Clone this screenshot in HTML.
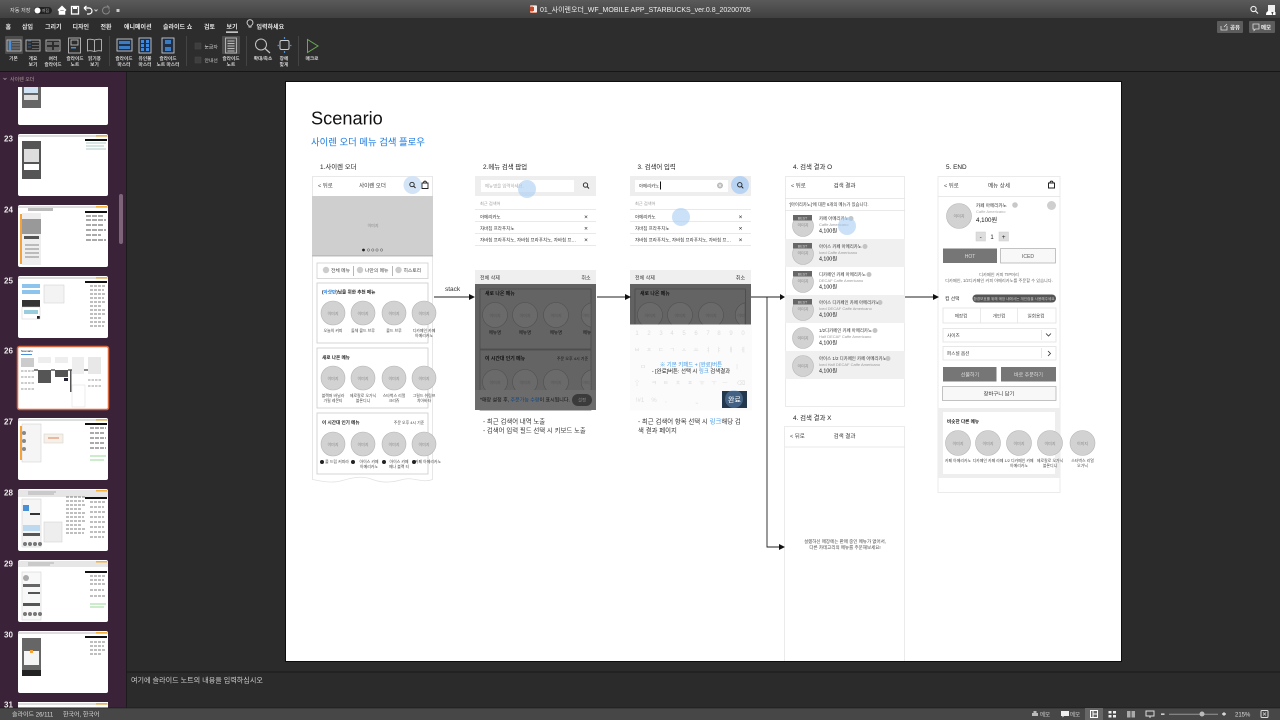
<!DOCTYPE html>
<html lang="ko"><head><meta charset="utf-8"><title>Scenario</title>
<style>
html,body{margin:0;padding:0;width:1280px;height:720px;overflow:hidden;background:#2b2b2b}
svg{display:block;filter:blur(.3px)}
text{font-family:"Liberation Sans","Noto Sans CJK KR",sans-serif}
.u text{fill:#d8d8d8;font-size:4.7px;text-anchor:middle;font-weight:700}
.t text{fill:#e4e4e4;font-size:6px;font-weight:700}
.s{font-size:3.9px;fill:#444;text-anchor:middle}
.g{font-size:4px;fill:#888;text-anchor:middle}
.c{fill:#d2d2d2;stroke:#b5b5b5;stroke-width:.6}
.d{fill:#6a6a6a;stroke:#505050;stroke-width:.6}
.l{stroke:#e2e2e2;stroke-width:.8;fill:none}
.m{fill:#555;font-size:4px;text-anchor:middle}
.h{font-size:6.4px;fill:#222}
.n{font-size:6.4px;fill:#333}
.k{font-size:6px;fill:#ddd;text-anchor:middle}
</style></head><body>
<svg width="1280" height="720" viewBox="0 0 1280 720" xmlns="http://www.w3.org/2000/svg">
<defs>
<linearGradient id="tb" x1="0" y1="0" x2="0" y2="1"><stop offset="0" stop-color="#5a5a5a"/><stop offset="1" stop-color="#404040"/></linearGradient>
</defs>
<rect width="1280" height="720" fill="#2b2b2b"/>
<!-- title bar -->
<rect width="1280" height="18" fill="url(#tb)"/>
<text x="10" y="12" font-size="5.200" fill="#ddd">자동 저장</text>
<rect x="34" y="7" width="18" height="7" rx="3.500" fill="#222"/><circle cx="37.500" cy="10.500" r="3" fill="#fff"/><text x="42" y="12" font-size="3.800" fill="#bbb">꺼짐</text>
<path d="M58 10.500l4-4 4 4M59.500 10v4h5v-4" stroke="#fff" stroke-width="1.500" fill="#fff"/>
<rect x="71.500" y="6.500" width="7" height="7.500" fill="none" stroke="#fff" stroke-width="1.300"/><rect x="73" y="6.500" width="4" height="2.500" fill="#fff"/>
<path d="M84 8h5a3 3 0 0 1 0 6h-2M84 8l2.500-2M84 8l2.500 2.500" stroke="#fff" stroke-width="1.200" fill="none"/>
<path d="M94.500 9.500l1.500 1.500 1.500-1.500" stroke="#ccc" fill="none"/>
<path d="M109 7h-3a3.500 3.500 0 1 0 3.500 3.500M109 7l-2-1.500M109 7v2.500" stroke="#888" fill="none"/>
<rect x="116.500" y="9" width="3" height="3" fill="#ccc"/>
<rect x="530" y="5" width="7" height="8" rx="1" fill="#e8a08a"/><rect x="533" y="6" width="4" height="6" fill="#eee"/><rect x="530" y="7" width="4" height="4" fill="#c4482a"/>
<text x="540" y="12" font-size="7" fill="#eee">01_사이렌오더_WF_MOBILE APP_STARBUCKS_ver.0.8_20200705</text>
<circle cx="1253.500" cy="9" r="2.600" fill="none" stroke="#eee" stroke-width="1.100"/><path d="M1255.500 11l2.500 2.500" stroke="#eee" stroke-width="1.200"/>
<rect x="1268" y="5" width="7" height="7" fill="#eee"/><path d="M1266 15c0-3 1.500-4 3-4s3 1 3 4zM1272.500 15h3v-3h-2" fill="#fff"/>
<!-- ribbon -->
<rect y="18" width="1280" height="53" fill="#2d2d2d"/>
<rect y="71" width="1280" height="1" fill="#161616"/>
<g class="t">
<text x="5.500" y="29">홈</text><text x="22" y="29">삽입</text><text x="45" y="29">그리기</text><text x="72.500" y="29">디자인</text><text x="100.500" y="29">전환</text><text x="124" y="29">애니메이션</text><text x="163" y="29">슬라이드 쇼</text><text x="204" y="29">검토</text><text x="226.500" y="29">보기</text><text x="256.500" y="29">입력하세요</text>
</g>
<rect x="226" y="31.500" width="12" height="1.200" fill="#fff"/>
<path d="M249 30v-1.500a3 3 0 1 1 2 0V30z" fill="none" stroke="#ddd" stroke-width=".9" transform="translate(0,-3)"/>
<rect x="1217" y="21" width="26" height="12" rx="1" fill="#5c5c5c"/><path d="M1221 26v4h6v-4M1224 27l3-3" stroke="#ddd" fill="none" stroke-width=".8"/><text x="1230" y="29.500" font-size="5.500" font-weight="700" fill="#eee">공유</text>
<rect x="1249" y="21" width="26" height="12" rx="1" fill="#5c5c5c"/><path d="M1253 24h6v5h-3.500l-1.500 1.500V29h-1z" stroke="#ddd" fill="none" stroke-width=".8"/><text x="1261" y="29.500" font-size="5.500" font-weight="700" fill="#eee">메모</text>
<!-- ribbon highlights and separators -->
<rect x="5" y="36" width="18" height="18" rx="1" fill="#4c4c4c"/>
<rect x="222" y="36" width="18" height="18" rx="1" fill="#4c4c4c"/>
<path d="M109.500 36v30M186.500 36v30M246.500 36v30M298.500 36v30" stroke="#444"/>
<!-- view icons -->
<g fill="none" stroke="#bbb" stroke-width=".9">
<rect x="7" y="40" width="14" height="11"/><rect x="26" y="40" width="14" height="11"/>
<rect x="46" y="40" width="14" height="11"/>
<rect x="68.500" y="38" width="12" height="15"/><rect x="71" y="40" width="7" height="5"/>
<path d="M94.500 40c-3-1-5-1-7-.5V51c2-.5 4-.5 7 .5 3-1 5-1 7-.5V39.500c-2-.5-4-.5-7 .5zM94.500 40v11.500"/>
<rect x="225.500" y="38" width="11" height="15"/><path d="M227.500 41h7M227.500 43.500h7M227.500 46h7M227.500 48.500h7M227.500 51h7"/>
</g>
<path d="M9 41h2v9H9zM28 41h3M28 44h3M28 47h3" stroke="#4a90d9" fill="#4a90d9" stroke-width=".5"/>
<path d="M12 42.500h8M12 45h8M12 48h8" stroke="#888" stroke-width=".8"/>
<path d="M32 42.500h7M32 45.500h7M32 48.500h7" stroke="#777" stroke-width=".8"/>
<path d="M47 42h5v3h-5zM54 42h5v3h-5zM47 47h5v3h-5zM54 47h5v3h-5z" fill="#666"/>
<rect x="71" y="47" width="5" height="1.500" fill="#4a90d9"/>
<!-- master icons -->
<rect x="117" y="39" width="15" height="12" fill="#1e2f45" stroke="#c9c9c9" stroke-width=".9"/><rect x="119" y="41" width="11" height="3" fill="#3c7cc4"/><rect x="119" y="46" width="11" height="3" fill="#3c7cc4"/>
<rect x="139" y="38" width="12" height="15" fill="#1e2f45" stroke="#c9c9c9" stroke-width=".9"/>
<path d="M141 40h3v3h-3zM146 40h3v3h-3zM141 44h3v3h-3zM146 44h3v3h-3zM141 48h3v3h-3zM146 48h3v3h-3z" fill="#3d8ae0"/>
<rect x="162" y="38" width="12" height="15" fill="#1e2f45" stroke="#c9c9c9" stroke-width=".9"/><rect x="165" y="40" width="6" height="4" fill="#3c7cc4"/><rect x="165" y="47" width="6" height="4" fill="#3c7cc4"/>
<!-- checkboxes -->
<rect x="195" y="43" width="6" height="6" fill="#3e3e3e" stroke="#484848" stroke-width=".5"/><rect x="195" y="57" width="6" height="6" fill="#3e3e3e" stroke="#484848" stroke-width=".5"/>
<text x="204.500" y="48.500" font-size="4.800" fill="#ccc">눈금자</text><text x="204.500" y="62" font-size="4.800" fill="#ccc">안내선</text>
<!-- zoom icons -->
<circle cx="261" cy="44.500" r="5.500" fill="none" stroke="#c4c4c4" stroke-width="1"/><path d="M265 48.500l5 4.500" stroke="#c4c4c4" stroke-width="1.200"/>
<rect x="280" y="40.500" width="9" height="9" rx="1.500" fill="none" stroke="#ccc"/><path d="M284.500 37v2M284.500 51v2M277.500 45.500h1.500M290 45.500h1.500" stroke="#4a90d9" stroke-width="1.200"/>
<path d="M307.500 39.500v13l10.500-6.500z" fill="none" stroke="#6aaa55" stroke-width="1"/>
<!-- ribbon labels -->
<g class="u">
<text x="13.500" y="60">기본</text>
<text x="33" y="60">개요</text><text x="33" y="66">보기</text>
<text x="53" y="60">여러</text><text x="53" y="66">슬라이드</text>
<text x="75" y="60">슬라이드</text><text x="75" y="66">노트</text>
<text x="94.500" y="60">읽기용</text><text x="94.500" y="66">보기</text>
<text x="124" y="60">슬라이드</text><text x="124" y="66">마스터</text>
<text x="145" y="60">유인물</text><text x="145" y="66">마스터</text>
<text x="168" y="60">슬라이드</text><text x="168" y="66">노트 마스터</text>
<text x="231" y="60">슬라이드</text><text x="231" y="66">노트</text>
<text x="263" y="60">확대/축소</text>
<text x="284" y="60">창에</text><text x="284" y="66">맞게</text>
<text x="312" y="60">매크로</text>
</g>
<!-- left pane -->
<rect x="0" y="72" width="126" height="636" fill="#3a2338"/>
<rect x="126" y="72" width="1" height="636" fill="#1c1c1c"/>
<path d="M3.500 78l1.500 1.500L6.500 78" stroke="#aaa" fill="none" stroke-width=".7"/>
<text x="10" y="81" font-size="5" fill="#a99">사이렌 오더</text>
<rect x="119" y="194" width="4" height="50" rx="2" fill="#7d6479"/>
<g font-size="8" font-weight="700" fill="#eee">
<text x="4" y="141.500">23</text><text x="4" y="212.500">24</text><text x="4" y="283.500">25</text><text x="4" y="353.500">26</text><text x="4" y="424.500">27</text><text x="4" y="495.500">28</text><text x="4" y="566.500">29</text><text x="4" y="637.500">30</text><text x="4" y="707.500">31</text>
</g>
<!-- thumbs -->
<path d="M18 87h90v36a2 2 0 0 1-2 2H20a2 2 0 0 1-2-2z" fill="#fff"/>
<rect x="22" y="87" width="19" height="21" fill="#666"/><rect x="24" y="87" width="14" height="6" fill="#cfe3f5"/><rect x="24" y="95" width="14" height="5" fill="#ddd"/>
<rect x="18" y="134" width="90" height="62" rx="2" fill="#fff"/>
<rect x="18" y="135" width="90" height="2" fill="#ddd"/><rect x="96" y="135" width="11" height="1.500" fill="#f3b23a"/><rect x="85" y="139" width="22" height="2" fill="#111"/>
<path d="M86 143h20M86 146h18M86 149h20" stroke="#9bb" stroke-width=".7"/>
<rect x="22" y="141" width="19" height="38" fill="#555"/><rect x="24" y="149" width="15" height="13" fill="#ddd"/><rect x="24" y="164" width="15" height="6" fill="#fff"/>
<rect x="18" y="205" width="90" height="62" rx="2" fill="#fff"/>
<rect x="18" y="206" width="90" height="2" fill="#ddd"/><rect x="96" y="206" width="11" height="1.500" fill="#f3b23a"/><rect x="85" y="211" width="22" height="2" fill="#111"/>
<rect x="28" y="208" width="25" height="3" fill="#bbb"/>
<path d="M86 216h18M86 220h20M86 225h18M86 230h20M86 235h15M86 240h20" stroke="#555" stroke-width=".9" stroke-dasharray="5 1"/>
<rect x="22" y="213" width="19" height="52" fill="#eee"/><rect x="22" y="219" width="19" height="15" fill="#999"/><rect x="24" y="236" width="15" height="3" fill="#555"/><rect x="20" y="214" width="2" height="50" fill="#f3a33a"/>
<path d="M25 245h14M25 249h14M25 253h14M25 257h14" stroke="#888" stroke-width="1"/>
<rect x="18" y="276" width="90" height="62" rx="2" fill="#fff"/>
<rect x="18" y="277" width="90" height="2" fill="#ddd"/><rect x="96" y="277" width="11" height="1.500" fill="#f3b23a"/><rect x="85" y="281" width="22" height="2" fill="#111"/>
<rect x="22" y="284" width="18" height="4" fill="#8cc4ee"/><rect x="22" y="290" width="18" height="4" fill="#8cc4ee"/><rect x="22" y="300" width="18" height="7" fill="#333"/><rect x="24" y="310" width="14" height="4" fill="#9cd"/><rect x="37" y="316" width="3" height="3" fill="#222"/><rect x="22" y="307" width="18" height="12" fill="none" stroke="#ccc" stroke-width=".5"/>
<rect x="44" y="285" width="20" height="18" fill="#f3f3f3" stroke="#ccc" stroke-width=".5"/>
<path d="M90 286h16M90 290h14M90 294h16M90 298h14M90 302h16M90 306h12M90 310h16M90 314h16M90 318h12M90 322h16M90 326h14" stroke="#555" stroke-width=".8" stroke-dasharray="3 1"/>
<rect x="17.500" y="346.500" width="91" height="63" rx="2" fill="#fff" stroke="#d9673e" stroke-width="1.500"/>
<text x="21" y="352" font-size="3" fill="#000">Scenario</text><rect x="21" y="354" width="11" height="1" fill="#4a90d9"/>
<rect x="21" y="358" width="13" height="9" fill="#ccc"/><rect x="38" y="357" width="13" height="6" fill="#eee"/><rect x="55" y="357" width="13" height="6" fill="#eee"/><rect x="72" y="357" width="12" height="17" fill="#eee"/><rect x="88" y="357" width="13" height="17" fill="#e8e8e8"/>
<rect x="38" y="370" width="13" height="13" fill="#555"/><rect x="55" y="370" width="13" height="7" fill="#555"/><rect x="64" y="378" width="4" height="3" fill="#223"/>
<path d="M34 370h4M51 370h4M68 370h4M84 370h4" stroke="#111" stroke-width="1"/><rect x="70" y="370" width="1.500" height="22" fill="#555"/>
<path d="M21 371h13M21 377h13M21 383h13M21 389h13M88 380h13M88 386h13" stroke="#bbb" stroke-width="1.500" stroke-dasharray="2.500 1"/>
<rect x="72" y="385" width="13" height="22" fill="#fff" stroke="#ddd" stroke-width=".5"/>
<rect x="18" y="418" width="90" height="62" rx="2" fill="#fff"/>
<rect x="18" y="419" width="90" height="2" fill="#ddd"/><rect x="96" y="419" width="11" height="1.500" fill="#f3b23a"/><rect x="85" y="423" width="22" height="2" fill="#111"/>
<rect x="22" y="424" width="19" height="38" fill="#f5f5f5" stroke="#ccc" stroke-width=".5"/><rect x="20" y="426" width="2" height="34" fill="#f3a33a"/>
<circle cx="24" cy="433" r="2" fill="#888"/><circle cx="24" cy="441" r="2" fill="#888"/><circle cx="24" cy="449" r="2" fill="#888"/>
<rect x="44" y="434" width="19" height="9" fill="#f6f0e8" stroke="#ccc" stroke-width=".5"/><rect x="48" y="437" width="11" height="2" fill="#e8b8a0"/>
<path d="M90 428h16M90 433h14M90 438h16M90 443h14M90 448h16" stroke="#555" stroke-width=".9" stroke-dasharray="4 1"/><path d="M90 456h16M90 460h14" stroke="#7c7" stroke-width=".8"/>
<rect x="18" y="489" width="90" height="62" rx="2" fill="#fff"/>
<rect x="18" y="490" width="90" height="7" fill="#e6e6e6"/><path d="M28 492h28M28 494h26" stroke="#777" stroke-width=".6"/><rect x="96" y="490" width="11" height="1.500" fill="#f3b23a"/><rect x="85" y="497" width="22" height="2" fill="#111"/>
<rect x="22" y="499" width="19" height="48" fill="#f5f5f5" stroke="#ccc" stroke-width=".5"/><rect x="23" y="505" width="6" height="6" fill="#4a90d9"/><rect x="30" y="513" width="10" height="2" fill="#333"/>
<rect x="23" y="525" width="17" height="6" fill="#bcd9ef"/><rect x="23" y="533" width="17" height="3" fill="#555"/>
<circle cx="25" cy="544" r="2" fill="#777"/><circle cx="30" cy="544" r="2" fill="#777"/><circle cx="35" cy="544" r="2" fill="#777"/><circle cx="40" cy="544" r="2" fill="#777"/>
<rect x="44" y="522" width="18" height="20" fill="#eee" stroke="#ccc" stroke-width=".5"/>
<path d="M66 497h20M66 501h18M66 505h20M66 509h16M66 513h20M66 517h18M66 521h20M66 525h16M66 529h20M66 533h18M90 502h16M90 507h14M90 512h16M90 517h14M90 522h16M90 527h14M90 532h16M90 537h14" stroke="#555" stroke-width=".8" stroke-dasharray="3 1"/>
<rect x="18" y="560" width="90" height="62" rx="2" fill="#fff"/>
<rect x="18" y="561" width="90" height="6" fill="#e6e6e6"/><path d="M28 563h26M28 565h22" stroke="#777" stroke-width=".6"/><rect x="96" y="561" width="11" height="1.500" fill="#f3b23a"/><rect x="85" y="571" width="22" height="2" fill="#111"/>
<rect x="22" y="572" width="19" height="48" fill="#f8f8f8" stroke="#ccc" stroke-width=".5"/><circle cx="26" cy="578" r="3" fill="#aaa"/><rect x="23" y="584" width="17" height="3" fill="#666"/><rect x="28" y="592" width="12" height="2" fill="#555"/><rect x="23" y="603" width="17" height="3" fill="#555"/>
<circle cx="25" cy="614" r="2" fill="#777"/><circle cx="30" cy="614" r="2" fill="#777"/><circle cx="35" cy="614" r="2" fill="#777"/><circle cx="40" cy="614" r="2" fill="#777"/>
<path d="M90 576h16M90 580h14M90 584h16M90 590h14M90 596h16" stroke="#555" stroke-width=".8" stroke-dasharray="3 1"/><path d="M90 604h16M90 607h14" stroke="#7c7" stroke-width=".8"/>
<rect x="18" y="631" width="90" height="62" rx="2" fill="#fff"/>
<rect x="18" y="632" width="90" height="2" fill="#ddd"/><rect x="96" y="632" width="11" height="1.500" fill="#f3b23a"/><rect x="85" y="636" width="22" height="2" fill="#111"/>
<rect x="22" y="638" width="19" height="38" fill="#666"/><rect x="24" y="651" width="15" height="14" fill="#f4f4f4"/><rect x="30" y="650" width="3" height="3" fill="#f3a33a"/><rect x="22" y="670" width="19" height="6" fill="#222"/>
<path d="M90 642h16M90 646h14M90 650h16M90 654h12" stroke="#555" stroke-width=".8" stroke-dasharray="3 1"/>
<rect x="18" y="702" width="90" height="6" fill="#fff"/><rect x="18" y="703" width="90" height="2" fill="#ddd"/><rect x="96" y="703" width="11" height="1.500" fill="#f3b23a"/>
<!-- slide -->
<rect x="285" y="81" width="837" height="581" fill="#0d0d0d"/>
<rect x="286" y="82" width="835" height="579" fill="#fff"/>
<text x="311" y="124.500" font-size="18.200" fill="#111">Scenario</text>
<text x="311" y="145.500" font-size="9.400" fill="#1d7ce0">사이렌 오더 메뉴 검색 플로우</text>
<g class="h">
<text x="320" y="169">1.사이렌 오더</text><text x="483" y="169">2.메뉴 검색 팝업</text><text x="637.500" y="169">3. 검색어 입력</text><text x="793" y="169">4. 검색 결과 O</text><text x="946" y="169">5. END</text><text x="793" y="420">4. 검색 결과 X</text>
</g>
<!-- column 1 -->
<path class="l" d="M312.500 176.500h120v303c-10 4-20-3-30 0s-20 4-30 0-20-2-30 1-20 1-30-1z" fill="#fff"/>
<text x="318" y="187.500" font-size="5.500" fill="#444">&lt; 뒤로</text>
<text x="372.500" y="187.500" font-size="5.500" fill="#333" text-anchor="middle">사이렌 오더</text>
<circle cx="412.500" cy="185" r="9" fill="#d3e4f7"/>
<circle cx="412" cy="184.500" r="2.200" fill="none" stroke="#222" stroke-width=".9"/><path d="M413.700 186.200l1.800 1.800" stroke="#222"/>
<path d="M422 183h6v5.500h-6zM423.500 183c0-2.500 3-2.500 3 0" fill="none" stroke="#222" stroke-width=".9"/>
<rect x="312" y="196" width="121" height="60" fill="#cfcfcf"/>
<text x="373" y="227" class="g">이미지</text>
<rect x="312" y="255" width="121" height="1.500" fill="#bcbcbc"/>
<circle cx="363.500" cy="250" r="1.400" fill="#222"/><circle cx="368.500" cy="250" r="1.200" fill="none" stroke="#555" stroke-width=".5"/><circle cx="372.800" cy="250" r="1.200" fill="none" stroke="#555" stroke-width=".5"/><circle cx="377" cy="250" r="1.200" fill="none" stroke="#555" stroke-width=".5"/><circle cx="381.500" cy="250" r="1.200" fill="none" stroke="#555" stroke-width=".5"/>
<rect x="317" y="263" width="111" height="15.500" fill="#fff" stroke="#cfcfcf" stroke-width=".8"/>
<path d="M353.500 266v10M392.500 266v10" stroke="#999" stroke-width=".7"/>
<circle cx="326" cy="270" r="3.200" fill="#ccc"/><circle cx="360" cy="270" r="3.200" fill="#ccc"/><circle cx="398.500" cy="270" r="3.200" fill="#ccc"/>
<g font-size="4.800" fill="#444"><text x="331" y="272">전체 메뉴</text><text x="365" y="272">나만의 메뉴</text><text x="403.500" y="272">히스토리</text></g>
<rect x="317" y="283" width="111" height="60" fill="#fff" stroke="#ccc" stroke-width=".8"/>
<rect x="317" y="348" width="111" height="60" fill="#fff" stroke="#ccc" stroke-width=".8"/>
<rect x="317" y="413" width="111" height="61" fill="#fff" stroke="#ccc" stroke-width=".8"/>
<text x="322" y="293.500" font-size="4.600" font-weight="700" fill="#222">(<tspan fill="#1d7ce0">아샷만</tspan>)님을 위한 추천 메뉴</text>
<text x="322" y="359" font-size="4.600" font-weight="700" fill="#222">새로 나온 메뉴</text>
<text x="322" y="424" font-size="4.600" font-weight="700" fill="#222">이 시간대 인기 메뉴</text>
<text x="409" y="424" class="s">주문 오후 4시 기준</text>
<g class="c">
<circle cx="333" cy="313" r="12"/><circle cx="363" cy="313" r="12"/><circle cx="394" cy="313" r="12"/><circle cx="424" cy="313" r="12"/>
<circle cx="333" cy="378" r="12"/><circle cx="363" cy="378" r="12"/><circle cx="394" cy="378" r="12"/><circle cx="424" cy="378" r="12"/>
<circle cx="333" cy="444" r="12"/><circle cx="363" cy="444" r="12"/><circle cx="394" cy="444" r="12"/><circle cx="424" cy="444" r="12"/>
</g>
<g class="g">
<text x="333" y="315">이미지</text><text x="363" y="315">이미지</text><text x="394" y="315">이미지</text><text x="424" y="315">이미지</text>
<text x="333" y="380">이미지</text><text x="363" y="380">이미지</text><text x="394" y="380">이미지</text><text x="424" y="380">이미지</text>
<text x="333" y="446">이미지</text><text x="363" y="446">이미지</text><text x="394" y="446">이미지</text><text x="424" y="446">이미지</text>
</g>
<g class="s">
<text x="333" y="332">오늘의 커피</text><text x="363" y="332">돌체 콜드 브루</text><text x="394" y="332">콜드 브루</text><text x="424" y="332">디카페인 카페</text><text x="424" y="337">아메리카노</text>
<text x="333" y="397">블랙퍼 바닐라</text><text x="333" y="402">가릴 레몬티</text><text x="363" y="397">제로칼로 오가닉</text><text x="363" y="402">블론디니</text><text x="394" y="397">스타벅스 리얼</text><text x="394" y="402">크리쥬</text><text x="424" y="397">그릴드 쉬림프</text><text x="424" y="402">치아바타</text>
<text x="337" y="463">콜 드립 커피라</text><text x="369" y="463">아이스 카페</text><text x="369" y="468">아메리카노</text><text x="399" y="463">아이스 카페</text><text x="399" y="468">메나 블랙 티</text><text x="428" y="463">카페 아메리카노</text>
</g>
<g fill="#222"><circle cx="322" cy="462" r="2"/><circle cx="353" cy="462" r="2"/><circle cx="384" cy="462" r="2"/><circle cx="414" cy="462" r="2"/></g>
<!-- column 2 -->
<rect x="475" y="176" width="121" height="234" fill="#fff"/>
<rect x="475" y="176" width="121" height="20" fill="#eee"/><rect x="481" y="180" width="93" height="12" fill="#fff"/>
<text x="485" y="187.500" font-size="4.400" fill="#aaa">메뉴명을 입력하세요.</text>
<circle cx="585.500" cy="185" r="2.200" fill="none" stroke="#222" stroke-width=".9"/><path d="M587.200 186.700l1.800 1.800" stroke="#222"/>
<path class="l" d="M475 209.500h121M475 221.500h121M475 233.500h121M475 245.500h121"/>
<text x="480" y="205" font-size="4.200" fill="#999">최근 검색어</text>
<g font-size="4.500" fill="#333"><text x="480" y="218.500">아메리카노</text><text x="480" y="230">자바칩 프라푸치노</text><text x="480" y="241.500">자바칩 프라푸치노, 자바칩 프라푸치노, 자바칩 프…</text></g>
<g font-size="6.500" fill="#222" text-anchor="middle"><text x="586" y="219">×</text><text x="586" y="230.500">×</text><text x="586" y="242">×</text></g>
<rect x="475" y="270" width="121" height="14" fill="#efefef"/>
<text x="480" y="279.500" font-size="5" fill="#333">전체 삭제</text><text x="586" y="279.500" font-size="5" fill="#333" text-anchor="middle">취소</text>
<rect x="475" y="284" width="121" height="126" fill="#626262"/>
<rect x="480" y="289" width="111" height="60" fill="#646464" stroke="#4a4a4a" stroke-width=".8"/>
<rect x="480" y="350" width="111" height="60" fill="#646464" stroke="#4a4a4a" stroke-width=".8"/>
<text x="485" y="295" font-size="4.900" font-weight="700" fill="#111">새로 나온 메뉴</text>
<text x="485" y="360" font-size="4.900" font-weight="700" fill="#111">이 시간대 인기 메뉴</text>
<text x="572.500" y="360" font-size="4" fill="#111" text-anchor="middle">주문 오후 4시 기준</text>
<g class="d"><circle cx="495" cy="315" r="12.500"/><circle cx="525" cy="315" r="12.500"/><circle cx="556" cy="315" r="12.500"/><path d="M591 302.800a12.500 12.500 0 0 0 0 24.400z"/><circle cx="495" cy="382" r="12.500"/><circle cx="525" cy="382" r="12.500"/><circle cx="556" cy="382" r="12.500"/><path d="M591 369.800a12.500 12.500 0 0 0 0 24.400z"/></g>
<g class="m"><text x="495" y="317">이미지</text><text x="525" y="317">이미지</text><text x="556" y="317">이미지</text><text x="586" y="317">이미</text><text x="495" y="384">이미지</text><text x="525" y="384">이미지</text><text x="556" y="384">이미지</text><text x="586" y="384">이미</text></g>
<g font-size="4.500" fill="#111" text-anchor="middle"><text x="495" y="334">메뉴명</text><text x="525" y="334">메뉴명</text><text x="556" y="334">메뉴명</text><text x="587" y="334">메뉴</text></g>
<rect x="475" y="390" width="121" height="20" fill="#6c6c6c"/>
<text x="480" y="401.500" font-size="5" fill="#111">*매장 설정 후, <tspan fill="#13447e">주문가능 수량</tspan>이 표시됩니다.</text>
<rect x="572" y="394" width="20" height="12" rx="6" fill="#3b3b3b"/><text x="582" y="401.500" font-size="4.500" fill="#888" text-anchor="middle">설정</text>
<circle cx="527" cy="189" r="9" fill="#a9cdf2" fill-opacity=".6"/>
<!-- column 3 -->
<rect x="630" y="176" width="121" height="234" fill="#fff"/>
<rect x="630" y="176" width="121" height="20" fill="#eee"/><rect x="635" y="180" width="93" height="12" fill="#fff"/>
<text x="639" y="187.500" font-size="4.400" fill="#333">아메리카노</text><rect x="660" y="181.500" width="1" height="8" fill="#111"/>
<circle cx="720" cy="185.500" r="3" fill="#bbb"/><path d="M718.800 184.300l2.400 2.400M721.200 184.300l-2.400 2.400" stroke="#fff" stroke-width=".6"/>
<circle cx="740" cy="185" r="9" fill="#b9d4f2"/><circle cx="739.800" cy="184.800" r="2.200" fill="none" stroke="#222" stroke-width=".9"/><path d="M741.500 186.500l1.800 1.800" stroke="#222"/>
<path class="l" d="M630 209.500h121M630 221.500h121M630 233.500h121M630 245.500h121"/>
<text x="635" y="205" font-size="4.200" fill="#999">최근 검색어</text>
<g font-size="4.500" fill="#333"><text x="635" y="218.500">아메리카노</text><text x="635" y="230">자바칩 프라푸치노</text><text x="635" y="241.500">자바칩 프라푸치노, 자바칩 프라푸치노, 자바칩 프…</text></g>
<g font-size="6.500" fill="#222" text-anchor="middle"><text x="740.500" y="219">×</text><text x="740.500" y="230.500">×</text><text x="740.500" y="242">×</text></g>
<rect x="630" y="270" width="121" height="14" fill="#efefef"/>
<text x="635" y="279.500" font-size="5" fill="#333">전체 삭제</text><text x="740.500" y="279.500" font-size="5" fill="#333" text-anchor="middle">취소</text>
<rect x="630" y="284" width="121" height="41" fill="#626262"/>
<path d="M635 325v-36h110.500v36" fill="#646464" stroke="#4a4a4a" stroke-width=".8"/>
<text x="640" y="295" font-size="4.900" font-weight="700" fill="#111">새로 나온 메뉴</text>
<g class="d"><circle cx="650" cy="315" r="12.500"/><circle cx="680" cy="315" r="12.500"/><circle cx="711" cy="315" r="12.500"/><path d="M745 302.800a12.500 12.500 0 0 0 0 24.400z"/></g>
<g class="m"><text x="650" y="317">이미지</text><text x="680" y="317">이미지</text><text x="711" y="317">이미지</text><text x="741" y="317">이미</text></g>
<rect x="630" y="324.500" width="122" height="86" fill="#fbfbfb"/>
<g class="k">
<text x="637" y="335">1</text><text x="649" y="335">2</text><text x="661" y="335">3</text><text x="672" y="335">4</text><text x="684" y="335">5</text><text x="696" y="335">6</text><text x="708" y="335">7</text><text x="719" y="335">8</text><text x="731" y="335">9</text><text x="743" y="335">0</text>
<text x="637" y="352">ㅂ</text><text x="649" y="352">ㅈ</text><text x="661" y="352">ㄷ</text><text x="672" y="352">ㄱ</text><text x="684" y="352">ㅅ</text><text x="696" y="352">ㅛ</text><text x="708" y="352">ㅕ</text><text x="719" y="352">ㅑ</text><text x="731" y="352">ㅐ</text><text x="743" y="352">ㅔ</text>
<text x="643" y="369">ㅁ</text><text x="737" y="369">ㅣ</text>
<text x="637" y="385">⇧</text><text x="654" y="385">ㅋ</text><text x="666" y="385">ㅌ</text><text x="678" y="385">ㅊ</text><text x="690" y="385">ㅍ</text><text x="702" y="385">ㅠ</text><text x="714" y="385">ㅜ</text><text x="725" y="385">ㅡ</text><text x="741" y="385">⌫</text>
<text x="640" y="402">!#1</text><text x="654" y="402">%</text><text x="666" y="402">,</text><text x="697" y="402">⎵</text>
</g>
<text x="691" y="366.500" font-size="5.400" fill="#3f9be8" text-anchor="middle">※ 기본 키패드 + [완료]버튼</text>
<text x="691" y="373" font-size="5.400" fill="#222" text-anchor="middle">- [완료]버튼: 선택 시 <tspan fill="#3f9be8">링크</tspan> 검색결과</text>
<rect x="722" y="391" width="25" height="17" fill="#24384d"/>
<circle cx="734" cy="399" r="9" fill="#7fb3e8" fill-opacity=".35"/>
<text x="734.500" y="402" font-size="7" fill="#fff" text-anchor="middle">완료</text>
<circle cx="681" cy="217" r="9" fill="#a9cdf2" fill-opacity=".6"/>
<!-- notes -->
<g class="n">
<text x="483" y="423.500">- 최근 검색어 내역 노출</text><text x="483" y="432.500">- 검색어 입력 필드 선택 시 키보드 노출</text>
<text x="638" y="423.500">- 최근 검색어 항목 선택 시 <tspan fill="#3f9be8">링크</tspan>해당 검</text><text x="638" y="432.500">색 결과 페이지</text>
</g>
<!-- column 4 O -->
<rect x="785.500" y="176.500" width="119" height="230" fill="#fff" stroke="#e6e6e6" stroke-width=".8"/>
<text x="791" y="187.500" font-size="5.500" fill="#444">&lt; 뒤로</text><text x="844.500" y="187.500" font-size="5.500" fill="#333" text-anchor="middle">검색 결과</text>
<path class="l" d="M785 198.500h120M785 210.500h120"/>
<text x="789" y="206" font-size="4.300" fill="#333">'[아이리카노]'에 대한 6개의 메뉴가 있습니다.</text>
<rect x="785" y="239" width="120" height="28" fill="#f0f0f0"/><rect x="785" y="295" width="120" height="28" fill="#f0f0f0"/><rect x="785" y="351" width="120" height="28" fill="#f0f0f0"/>
<g class="c"><circle cx="803" cy="226" r="10.500"/><circle cx="803" cy="254" r="10.500"/><circle cx="803" cy="282" r="10.500"/><circle cx="803" cy="310" r="10.500"/><circle cx="803" cy="338" r="10.500"/><circle cx="803" cy="366" r="10.500"/></g>
<g fill="#676767"><rect x="793" y="215" width="19" height="5.500"/><rect x="793" y="243" width="19" height="5.500"/><rect x="793" y="271" width="19" height="5.500"/><rect x="793" y="299" width="19" height="5.500"/></g>
<g font-size="3.600" fill="#ddd" text-anchor="middle"><text x="802.500" y="219.300">BEST</text><text x="802.500" y="247.300">BEST</text><text x="802.500" y="275.300">BEST</text><text x="802.500" y="303.300">BEST</text></g>
<g class="g"><text x="803" y="226.500">이미지</text><text x="803" y="254.500">이미지</text><text x="803" y="282.500">이미지</text><text x="803" y="310.500">이미지</text><text x="803" y="339.500">이미지</text><text x="803" y="367.500">이미지</text></g>
<g font-size="4.400" fill="#333">
<text x="819" y="220">카페 아메리카노</text><text x="819" y="248">아이스 카페 아메리카노</text><text x="819" y="276">디카페인 카페 아메리카노</text><text x="819" y="304">아이스 디카페인 카페 아메리카노</text><text x="819" y="332">1/2디카페인 카페 아메리카노</text><text x="819" y="360">아이스 1/2 디카페인 카페 아메리카노</text>
</g>
<g font-size="4" fill="#999">
<text x="819" y="226">Caffe Americano</text><text x="819" y="254">Iced Caffe Americano</text><text x="819" y="282">DECAF Caffe Americano</text><text x="819" y="310">Iced DECAF Caffe Americano</text><text x="819" y="338">Half DECAF Caffe Americano</text><text x="819" y="366">Iced Half DECAF Caffe Americano</text>
</g>
<g font-size="5.300" fill="#111">
<text x="819" y="232.500">4,100원</text><text x="819" y="260.500">4,100원</text><text x="819" y="288.500">4,100원</text><text x="819" y="316.500">4,100원</text><text x="819" y="344.500">4,100원</text><text x="819" y="372.500">4,100원</text>
</g>
<g fill="#c4c4c4"><circle cx="851" cy="218.500" r="2.500"/><circle cx="865" cy="246.500" r="2.500"/><circle cx="869" cy="274.500" r="2.500"/><circle cx="880" cy="302.500" r="2.500"/><circle cx="875" cy="330.500" r="2.500"/><circle cx="888" cy="358.500" r="2.500"/></g>
<circle cx="847" cy="226" r="9" fill="#a9cdf2" fill-opacity=".6"/>
<!-- column 4 X -->
<path d="M784.500 661v-234.500h120v234.500" fill="#fff" stroke="#e6e6e6" stroke-width=".8"/>
<text x="790" y="438" font-size="5.500" fill="#444">&lt; 뒤로</text><text x="844.500" y="438" font-size="5.500" fill="#333" text-anchor="middle">검색 결과</text>
<path class="l" d="M785 447h120"/>
<text x="845" y="543" font-size="4.500" fill="#444" text-anchor="middle">설렜하신 매장에는 판매 중인 메뉴가 없어서,</text>
<text x="845" y="549" font-size="4.500" fill="#444" text-anchor="middle">다른 카테고리의 메뉴를 주문해보세요!</text>
<!-- column 5 -->
<rect x="938" y="176.500" width="122" height="316" fill="#fff" stroke="#e6e6e6" stroke-width=".8"/>
<text x="944" y="187.500" font-size="5.500" fill="#444">&lt; 뒤로</text><text x="999" y="187.500" font-size="5.500" fill="#333" text-anchor="middle">메뉴 상세</text>
<path d="M1048.500 183h6v5h-6zM1050 183c0-2.500 3-2.500 3 0" fill="none" stroke="#222" stroke-width="1"/>
<path class="l" d="M938 196.500h122"/>
<circle class="c" cx="959" cy="216" r="12.500"/><text x="959" y="217.500" class="g">이미지</text>
<text x="976" y="207" font-size="4.600" fill="#333">카페 아메리카노</text><circle cx="1015" cy="205" r="2.800" fill="#c8c8c8"/>
<text x="976" y="213" font-size="4" fill="#aaa">Caffe Americano</text>
<text x="976" y="222" font-size="6.200" fill="#111">4,100원</text>
<circle cx="1051.500" cy="205.500" r="4.500" fill="#cfcfcf"/>
<rect x="976" y="232" width="9.500" height="9" fill="#ddd" stroke="#ccc" stroke-width=".5"/><text x="980.700" y="239" font-size="6.500" fill="#222" text-anchor="middle">-</text>
<text x="992" y="239" font-size="6" fill="#222" text-anchor="middle">1</text>
<rect x="999" y="232" width="9.500" height="9" fill="#ddd" stroke="#ccc" stroke-width=".5"/><text x="1003.700" y="239" font-size="6.500" fill="#222" text-anchor="middle">+</text>
<rect x="943" y="248.500" width="54" height="14.500" fill="#767676"/><text x="970" y="258" font-size="5" fill="#ddd" text-anchor="middle">HOT</text>
<rect x="1000.500" y="248.500" width="55" height="14.500" fill="#f8f8f8" stroke="#aaa" stroke-width=".7"/><text x="1028" y="258" font-size="5" fill="#555" text-anchor="middle">ICED</text>
<text x="999" y="276" font-size="4.200" fill="#666" text-anchor="middle">디카페인 커피 TIP머리</text>
<text x="999" y="282" font-size="4.200" fill="#666" text-anchor="middle">디카페인, 1/2디카페인 커피 아메리카노를 주문할 수 있습니다.</text>
<text x="945" y="300" font-size="4.800" fill="#333">컵 선택</text>
<rect x="972.500" y="294.500" width="83.500" height="8" rx="4" fill="#555"/><text x="1014" y="300" font-size="3.600" fill="#ccc" text-anchor="middle">환경보호를 위해 매장 내에서는 개인컵을 사용해주세요</text>
<rect x="943" y="308" width="113" height="15" fill="#fff" stroke="#e2e2e2" stroke-width=".8"/><path d="M980.500 308v15M1017.500 308v15" stroke="#e2e2e2" stroke-width=".7"/>
<g font-size="4.600" fill="#444" text-anchor="middle"><text x="961" y="317.500">매장컵</text><text x="999" y="317.500">개인컵</text><text x="1036" y="317.500">일회용컵</text></g>
<rect x="943" y="328.500" width="113" height="13.500" fill="#fff" stroke="#e2e2e2" stroke-width=".8"/><path d="M1041.500 330v10" stroke="#ddd" stroke-width=".7"/><path d="M1046 333.500l2.500 2.500 2.500-2.500" stroke="#333" fill="none" stroke-width=".8"/>
<rect x="943" y="346.500" width="113" height="13.500" fill="#fff" stroke="#e2e2e2" stroke-width=".8"/><path d="M1041.500 348v10" stroke="#ddd" stroke-width=".7"/><path d="M1048 351l2.500 2.500-2.500 2.500" stroke="#333" fill="none" stroke-width=".8"/>
<text x="947" y="337" font-size="4.600" fill="#333">사이즈</text><text x="947" y="355" font-size="4.600" fill="#333">퍼스널 옵션</text>
<rect x="943" y="367" width="53.500" height="14.500" fill="#767676"/><text x="970" y="376.500" font-size="5" fill="#ddd" text-anchor="middle">선물하기</text>
<rect x="1001" y="367" width="55" height="14.500" fill="#767676"/><text x="1028.500" y="376.500" font-size="5" fill="#ddd" text-anchor="middle">바로 주문하기</text>
<rect x="942.500" y="386.500" width="113.500" height="14" fill="#f8f8f8" stroke="#aaa" stroke-width=".7"/><text x="999" y="395.500" font-size="5.300" fill="#333" text-anchor="middle">장바구니 담기</text>
<rect x="938" y="408" width="122" height="70" fill="#eee"/>
<rect x="943" y="412" width="112" height="62" fill="#fff"/>
<text x="947" y="423" font-size="4.600" font-weight="700" fill="#222">비슷한 다른 메뉴</text>
<g class="c"><circle cx="958" cy="443" r="12.500"/><circle cx="988" cy="443" r="12.500"/><circle cx="1019" cy="443" r="12.500"/><circle cx="1050" cy="443" r="12.500"/><circle cx="1082.500" cy="443" r="12.500"/></g>
<g class="g"><text x="958" y="445">이미지</text><text x="988" y="445">이미지</text><text x="1019" y="445">이미지</text><text x="1050" y="445">이미지</text><text x="1082.500" y="445">이미지</text></g>
<g class="s"><text x="958" y="462">카페 아메리카노</text><text x="988" y="462">디카페인 카페 라떼</text><text x="1019" y="462">1/2 디카페인 카페</text><text x="1019" y="467">아메리카노</text><text x="1050" y="462">제로칼로 오가닉</text><text x="1050" y="467">블론디니</text><text x="1082.500" y="462">스타벅스 리얼</text><text x="1082.500" y="467">오가닉</text></g>
<!-- arrows -->
<text x="445" y="291" font-size="6.500" fill="#333">stack</text>
<g stroke="#222" stroke-width=".9" fill="none"><path d="M434 297h36M597 297h28M751 297h29M905 297h28M767 297v250h12"/></g>
<g fill="#111"><path d="M469 294l6 3-6 3zM625 294l6 3-6 3zM780 294l5 3-5 3zM933 294l6 3-6 3zM779 544l6 3-6 3z"/></g>
<!-- notes pane -->
<rect y="671.500" x="127" width="1153" height="1" fill="#181818"/>
<text x="131" y="682.500" font-size="7.100" fill="#cfcfcf">여기에 슬라이드 노트의 내용을 입력하십시오</text>
<!-- status bar -->
<rect y="708" width="1280" height="12" fill="#474747"/>
<rect y="707.500" width="1280" height=".8" fill="#1c1c1c"/>
<text x="12" y="716.500" font-size="6" fill="#ddd">슬라이드 26/111</text>
<text x="63" y="716.500" font-size="6" fill="#ddd">한국어, 한국어</text>
<path d="M1032 716h6v-3h-1.500v-2h-3v2H1032z" fill="#bbb"/><text x="1040" y="716.500" font-size="5.500" fill="#ccc">메모</text>
<path d="M1061 711h8v5h-5l-1.500 1.500V716H1061z" fill="#eee"/><text x="1070" y="716.500" font-size="5.500" fill="#ccc">메모</text>
<rect x="1085" y="708" width="18" height="12" fill="#666"/>
<rect x="1090.500" y="710.500" width="7" height="7" fill="none" stroke="#fff"/><path d="M1093 711v6M1093 714h4" stroke="#fff"/>
<path d="M1108.500 711h3v2.500h-3zM1113 711h3v2.500h-3zM1108.500 715h3v2.500h-3zM1113 715h3v2.500h-3z" fill="#eee"/>
<rect x="1127" y="711" width="8" height="6.500" fill="#aaa"/><path d="M1131 711v6.500" stroke="#444"/>
<rect x="1146" y="711" width="8" height="5" fill="none" stroke="#ddd"/><path d="M1150 716v2" stroke="#ddd"/>
<rect x="1161" y="713.500" width="3.500" height="1.300" fill="#eee"/>
<rect x="1169" y="713.800" width="49" height=".8" fill="#aaa"/>
<circle cx="1202" cy="714" r="2.500" fill="#bbb"/>
<path d="M1222 714h4M1224 712.200v3.600" stroke="#eee" stroke-width="1.200"/>
<text x="1235" y="716.500" font-size="6" fill="#ddd">215%</text>
<rect x="1261" y="710.500" width="7" height="7" rx="1" fill="none" stroke="#ddd"/><path d="M1263 712.500l3 3M1266 712.500l-3 3" stroke="#ddd" stroke-width=".7"/>
</svg>
</body></html>
